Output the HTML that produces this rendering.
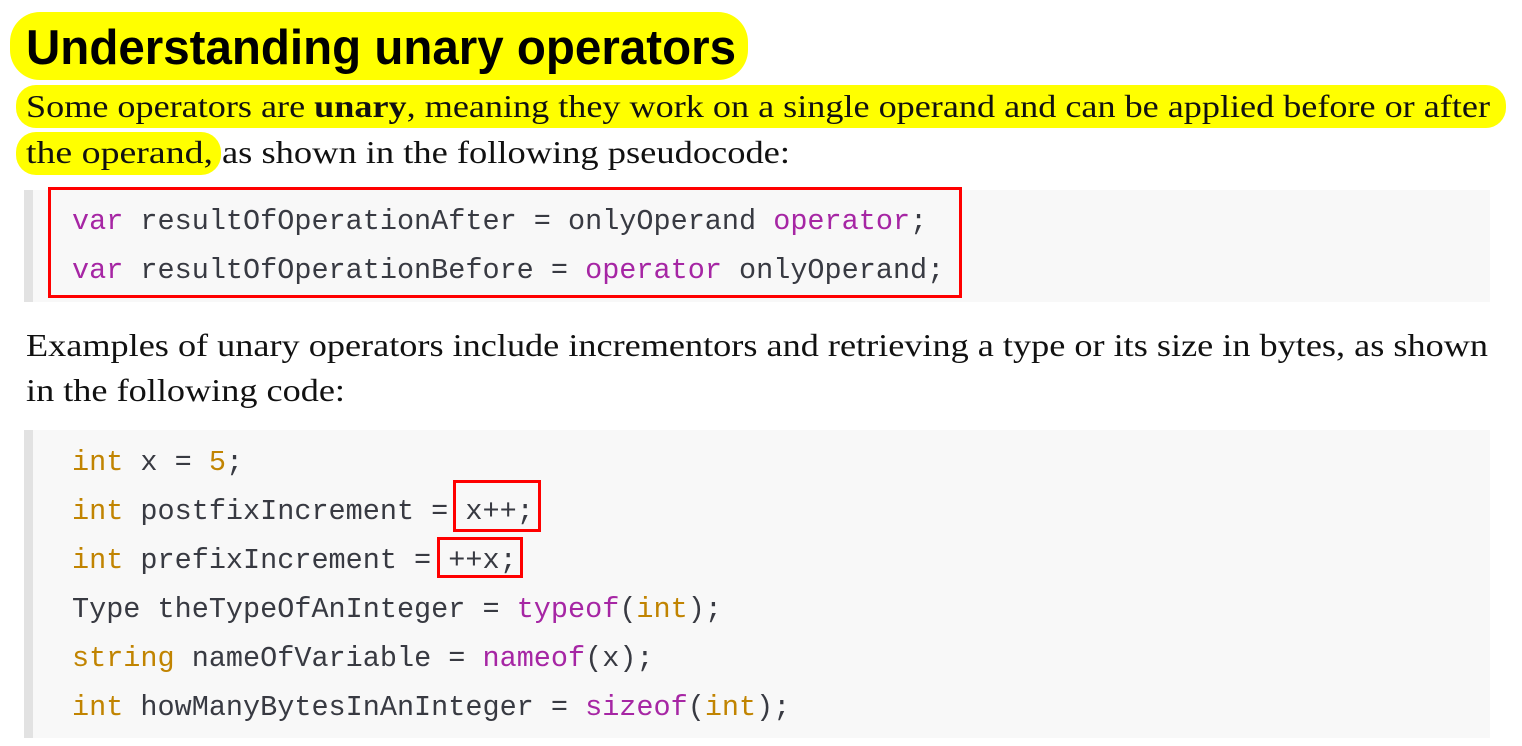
<!DOCTYPE html>
<html><head><meta charset="utf-8"><style>
html,body{margin:0;padding:0;background:#fff;width:1522px;height:746px;overflow:hidden}
svg{display:block}
.s{font-family:"Liberation Serif",serif;font-size:31.5px;fill:#111}
.h{font-family:"Liberation Sans",sans-serif;font-size:49px;font-weight:bold;fill:#000}
.c{font-family:"Liberation Mono",monospace;font-size:28.5px;fill:#383a42}
.k{fill:#a626a4}.t{fill:#c18401}
</style></head><body>
<svg width="1522" height="746" viewBox="0 0 1522 746" xmlns="http://www.w3.org/2000/svg">
<rect x="10" y="12" width="738" height="68" rx="30" fill="#ffff00"/>
<text class="h" x="26" y="64" textLength="710" lengthAdjust="spacingAndGlyphs">Understanding unary operators</text>
<rect x="16" y="85" width="1490" height="43" rx="20" fill="#ffff00"/>
<rect x="16" y="132" width="205" height="43" rx="20" fill="#ffff00"/>
<text class="s" x="26" y="117" textLength="1464" lengthAdjust="spacingAndGlyphs">Some operators are <tspan font-weight="bold">unary</tspan>, meaning they work on a single operand and can be applied before or after</text>
<text class="s" x="26" y="163" textLength="187" lengthAdjust="spacingAndGlyphs">the operand,</text>
<text class="s" x="222" y="163" textLength="568" lengthAdjust="spacingAndGlyphs">as shown in the following pseudocode:</text>
<rect x="24" y="190" width="1466" height="112" fill="#f8f8f8"/>
<rect x="24" y="190" width="9" height="112" fill="#e2e2e2"/>
<text class="c" x="72" y="229"><tspan class="k">var</tspan> resultOfOperationAfter = onlyOperand <tspan class="k">operator</tspan>;</text>
<text class="c" x="72" y="278"><tspan class="k">var</tspan> resultOfOperationBefore = <tspan class="k">operator</tspan> onlyOperand;</text>
<rect x="49.5" y="188.5" width="911" height="108" fill="none" stroke="#f00" stroke-width="3"/>
<text class="s" x="26" y="356" textLength="1462" lengthAdjust="spacingAndGlyphs">Examples of unary operators include incrementors and retrieving a type or its size in bytes, as shown</text>
<text class="s" x="26" y="401" textLength="319" lengthAdjust="spacingAndGlyphs">in the following code:</text>
<rect x="24" y="430" width="1466" height="308" fill="#f8f8f8"/>
<rect x="24" y="430" width="9" height="308" fill="#e2e2e2"/>
<text class="c" x="72" y="470"><tspan class="t">int</tspan> x = <tspan class="t">5</tspan>;</text>
<text class="c" x="72" y="519"><tspan class="t">int</tspan> postfixIncrement = x++;</text>
<text class="c" x="72" y="568"><tspan class="t">int</tspan> prefixIncrement = ++x;</text>
<text class="c" x="72" y="617">Type theTypeOfAnInteger = <tspan class="k">typeof</tspan>(<tspan class="t">int</tspan>);</text>
<text class="c" x="72" y="666"><tspan class="t">string</tspan> nameOfVariable = <tspan class="k">nameof</tspan>(x);</text>
<text class="c" x="72" y="715"><tspan class="t">int</tspan> howManyBytesInAnInteger = <tspan class="k">sizeof</tspan>(<tspan class="t">int</tspan>);</text>
<rect x="454.5" y="481.5" width="85" height="49" fill="none" stroke="#f00" stroke-width="3"/>
<rect x="438.5" y="538.5" width="83" height="38" fill="none" stroke="#f00" stroke-width="3"/>
</svg>
</body></html>
